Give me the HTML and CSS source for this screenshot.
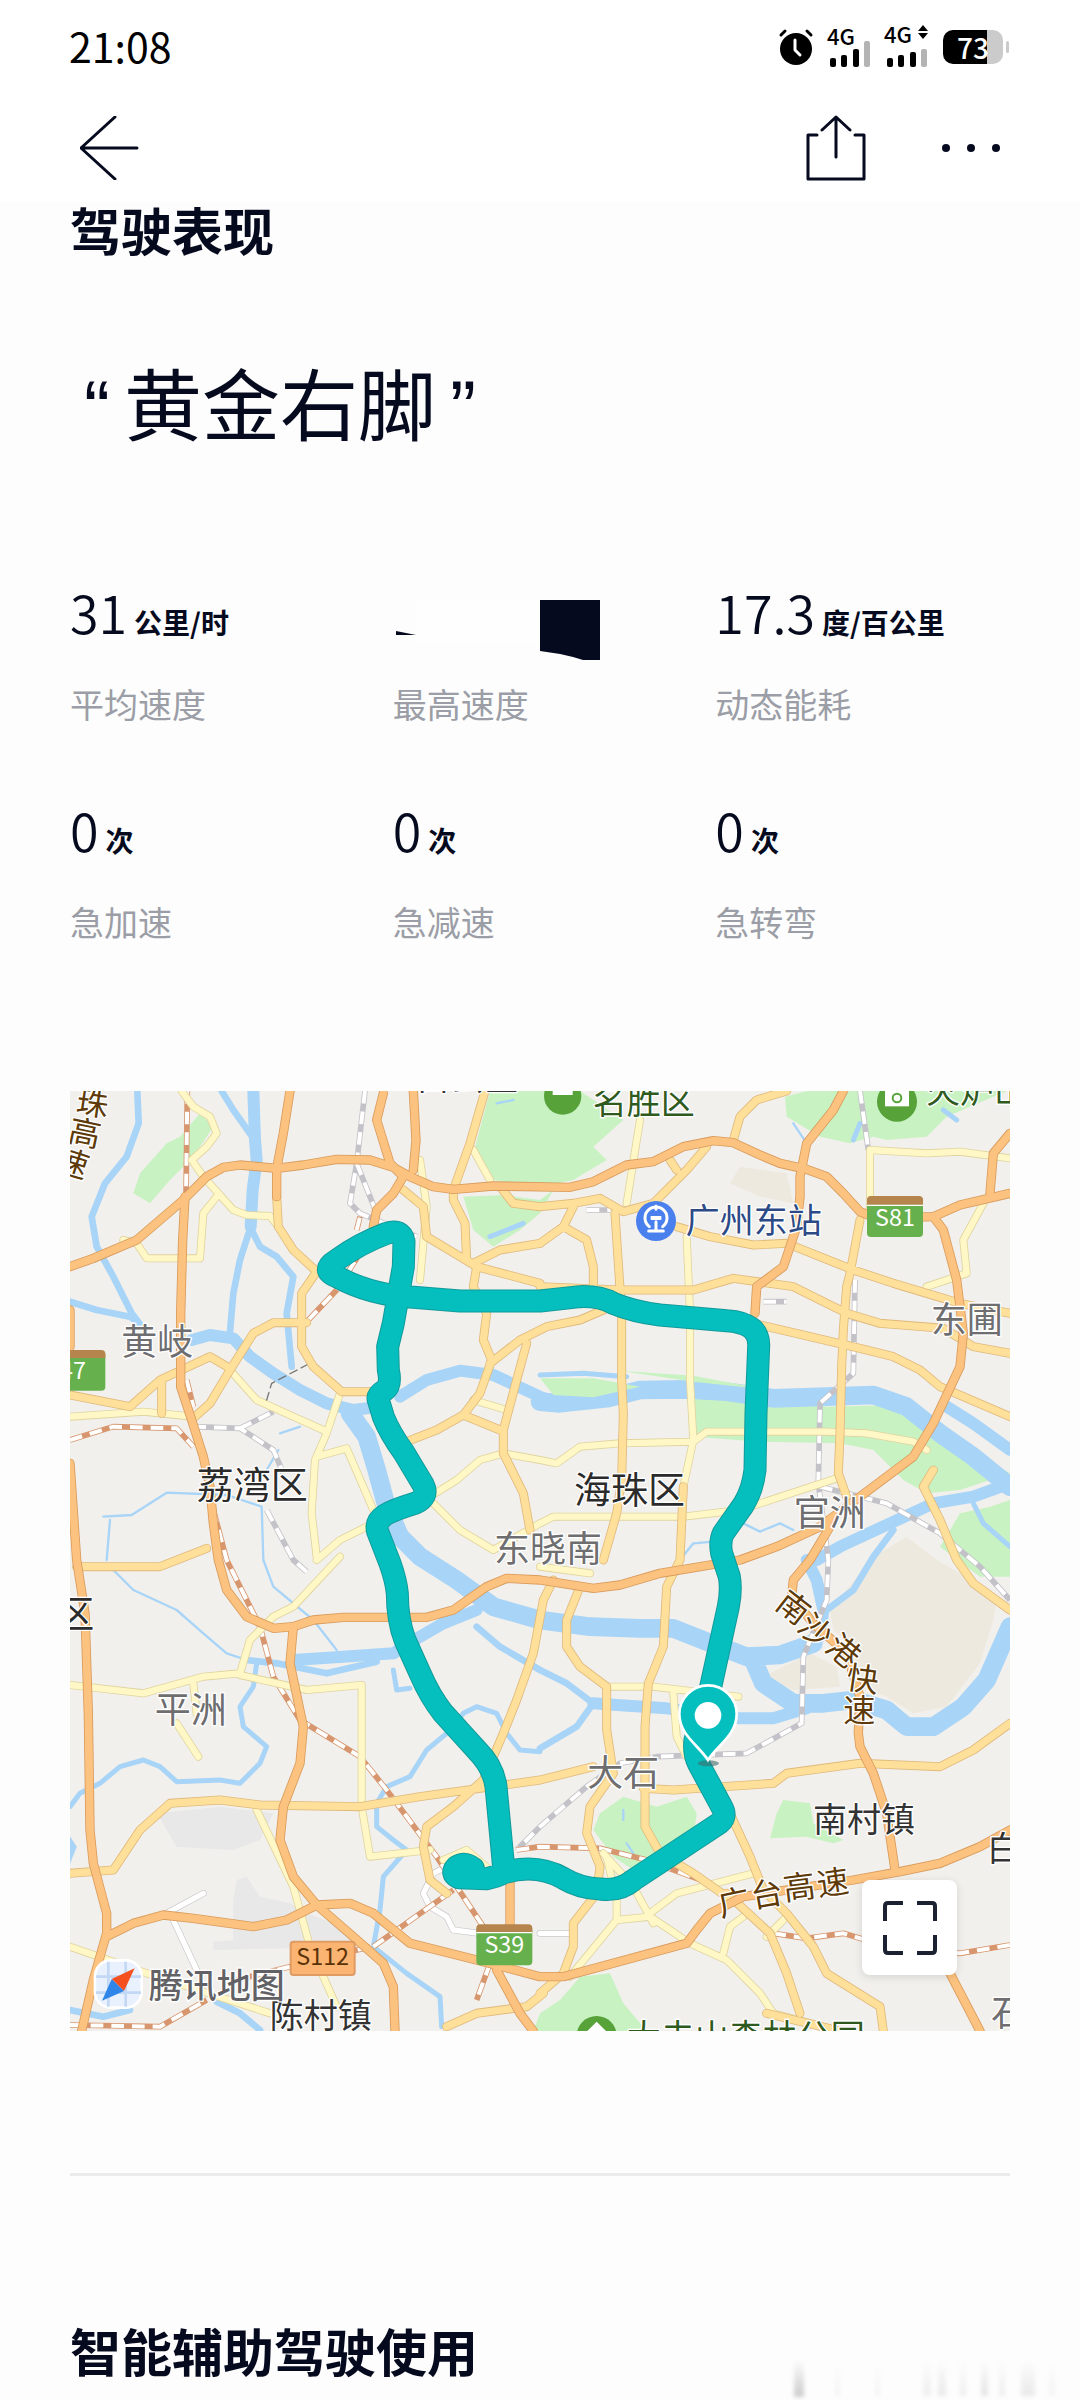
FILE: index.html
```html
<!DOCTYPE html>
<html lang="zh-CN">
<head>
<meta charset="utf-8">
<meta name="viewport" content="width=device-width, initial-scale=1">
<title>驾驶表现</title>
<link rel="stylesheet" href="styles.css">
</head>
<body>
<header class="top">
  <div class="status">
    <time class="clock">21:08</time>
    <div class="indicators">
      <svg class="ind-alarm" viewBox="0 0 36 40" aria-hidden="true">
        <circle cx="18" cy="22" r="16"/>
        <path class="ear" d="M3 8 7 4M29 4l4 4"/>
        <path class="hand" d="M17 13v10l5 5"/>
      </svg>
      <div class="signal">
        <span class="net">4G</span>
        <svg viewBox="0 0 42 28" aria-hidden="true"><rect x="1" y="19" width="6" height="9" rx="2"/><rect x="12" y="16" width="6" height="12" rx="2"/><rect x="24" y="10" width="6" height="18" rx="2"/><rect class="off" x="35" y="2" width="6" height="26" rx="2"/></svg>
      </div>
      <div class="signal">
        <span class="net">4G</span>
        <svg viewBox="0 0 42 28" aria-hidden="true"><rect x="1" y="19" width="6" height="9" rx="2"/><rect x="12" y="16" width="6" height="12" rx="2"/><rect x="24" y="13" width="6" height="15" rx="2"/><rect class="off" x="35" y="10" width="6" height="18" rx="2"/></svg>
        <svg class="updown" viewBox="0 0 10 14" aria-hidden="true"><path d="M0 6 5 0l5 6zM0 8l5 6 5-6z"/></svg>
      </div>
      <div class="battery"><span>73</span></div>
    </div>
  </div>
  <nav class="bar">
    <button class="icon-btn" type="button" aria-label="返回">
      <svg width="60" height="64" viewBox="0 0 60 64"><path d="M35 1 1 32l34 31M1 32h56"/></svg>
    </button>
    <div class="bar-right">
      <button class="icon-btn" type="button" aria-label="分享">
        <svg width="60" height="66" viewBox="0 0 60 66"><path d="M11 20H2v44h56V20h-9M30 42V2M16 15 30 2l14 13"/></svg>
      </button>
      <button class="icon-btn" type="button" aria-label="更多">
        <svg class="dots" width="60" height="10" viewBox="0 0 60 10"><circle cx="5" cy="5" r="4"/><circle cx="30" cy="5" r="4"/><circle cx="55" cy="5" r="4"/></svg>
      </button>
    </div>
  </nav>
</header>

<main class="page">
  <section>
    <h1 class="title">驾驶表现</h1>
    <p class="verdict"><span class="quote">“</span>黄金右脚<span class="quote">”</span></p>
    <dl class="stats">
      <div class="stat"><dd>31<small>公里/时</small></dd><dt>平均速度</dt></div>
      <div class="stat">
        <dd><svg class="masked" width="206" height="64" viewBox="0 0 206 64" aria-hidden="true"><path class="patch" d="M22 20H147V62H22z"/><path d="M3 51l20 4H3zM147 20h60v60h-17l-10-3q-16-4-33-6z"/></svg></dd>
        <dt>最高速度</dt>
      </div>
      <div class="stat"><dd>17.3<small>度/百公里</small></dd><dt>动态能耗</dt></div>
      <div class="stat"><dd>0<small>次</small></dd><dt>急加速</dt></div>
      <div class="stat"><dd>0<small>次</small></dd><dt>急减速</dt></div>
      <div class="stat"><dd>0<small>次</small></dd><dt>急转弯</dt></div>
    </dl>

    <div class="map">
      <svg class="map-art" viewBox="30 33 2820 2820" role="img" aria-label="行程路线地图">
        <defs>
          <g id="pale">
            <path d="M365 33 400 80 450 110 470 160 440 200 395 240 430 290 520 390 560 405 630 408 655 440M190 480 230 490 260 535 420 535 430 400 470 350M30 1010 250 995 400 1010M510 870 590 960 700 1010 790 1050M840 940 800 1060 765 1140 755 1300 770 1430M840 1430 700 1580 640 1610 570 1680 540 1780 430 1790 250 1840 30 1815M540 1785 740 1830 905 1815 905 2180 930 2330 1110 2310M770 1130 860 1105 940 1290M940 1330 840 1380 770 1440"/>
            <path d="M1110 1250 1190 1200 1260 1140 1330 1120 1440 1140 1490 1150 1560 1100 1680 1090 1900 1085 1940 1055 2300 1055 2420 1060 2560 1085 2600 1110M1120 1270 1200 1350 1300 1410 1440 1330 1480 1310 1700 1310 1870 1310 2040 1290 2330 1195M1740 120 1700 370M1880 470 1890 700 1890 900 1900 1080 1870 1220M2430 400 2430 210 2600 220 2700 215 2850 235M2770 370 2710 480 2720 580 2600 620M1240 960 1340 990M1240 210 1290 300M1080 240 1100 380 1080 600M1440 1460 1590 1480"/>
            <path d="M590 2190 700 2420 750 2600 830 2780M400 1810 410 1900M350 1930 415 2030M1640 1820 1780 1820 2035 1850M1840 1840 1850 1970 1880 2030M1530 2690 1670 2520 1670 2460 1640 2330M1670 2520 1770 2510 1890 2590 2000 2640 2100 2740 2140 2800 2340 2853M1770 2500 1850 2440 2080 2380M1630 2320 1720 2420 1780 2530M1990 2620 2010 2540 2050 2510M2120 2570 2180 2510M30 2600 260 2680 630 2800M1150 2340 1220 2310 1290 2370"/>
          </g>
          <g id="yellow">
            <path d="M650 350 655 440 700 510 770 575 725 640 725 800 760 860 845 935 960 935M30 945 210 980 300 900 450 830 510 865M305 900V1000M405 1010 450 970 510 870 580 760 640 728 740 728M1275 33 1230 190 1180 330 1180 360 1215 430 1220 540 1250 560 1240 620 1280 700 1270 780 1295 840 1260 940 1210 1005 1130 1050 1040 1085M1030 330 1090 380 1100 470 1250 560 1440 610M1240 550 1320 510 1440 490M1290 850 1380 780 1460 740 1560 720 1630 690M1400 790 1370 900 1330 1050 1330 1120 1390 1240 1410 1350M1210 1005 1320 1050"/>
            <path d="M1440 620 1680 630 1900 630 2020 595 2200 620 2360 700 2460 730 2650 745 2740 800 2850 820M2080 730 2400 805 2500 830 2580 870 2640 920 2850 1010M1850 440 1950 470 2080 495 2180 490 2380 570 2500 610 2700 670 2850 700M1320 320 1360 370 1440 380 1540 370 1620 355 1690 395 1780 370 1880 270 1940 200M1830 240 1850 270M2020 180 2040 110 2090 60 2180 33M1665 400 1675 550 1685 700 1685 900 1690 1000 1685 1200 1670 1300 1630 1440M1540 380 1510 440 1440 490M1510 440 1580 480 1600 560 1600 620M2400 420 2370 580 2360 620 2350 750 2345 860 2340 1060 2335 1180 2360 1250M2620 1170 2590 1220 2640 1320 2690 1440 2740 1510 2850 1590"/>
            <path d="M1870 1220 1860 1440 1820 1520 1810 1700 1765 1810 1755 1940 1755 2240 1800 2320 1900 2380 2000 2450M1480 1500 1450 1560 1420 1720 1370 1860 1330 1960 1270 2100 1180 2180 1100 2240 1090 2300 1110 2400 1160 2440M1560 1520 1520 1620 1520 1700 1560 1760 1640 1820 1640 1950 1660 2080 1590 2180 1580 2260 1620 2360 1610 2440 1540 2530 1540 2600 1510 2680 1440 2740M50 1460 300 1460 440 1405M30 2380 160 2370 240 2250 330 2170 480 2160 600 2175 900 2180 1080 2150 1440 2100 1600 2060M1750 2125 1840 2130 2140 2110 2180 2080 2400 2050 2640 2060 2740 2010 2850 1930M2010 2200 2070 2330 2110 2430 2180 2500 2260 2600 2300 2680 2460 2780 2470 2853M2000 2440 2130 2560 2180 2680 2220 2800M1160 2840 1250 2800 1400 2780 1450 2740M2120 2800 2340 2853"/>
          </g>
          <g id="orange">
            <path d="M30 560 100 535 230 480 300 420 370 360 440 290 490 262 540 255 650 265 730 255 830 238 930 240 1000 262 1050 290 1120 320 1180 328 1300 318 1530 322 1600 305 1700 255 1780 245 1870 200 1960 182 2020 188 2100 225 2160 250 2240 268 2300 290 2350 340 2400 395 2450 415 2620 410 2700 375 2850 340M690 33 670 160 650 265 650 350M970 40 950 120 990 250 1030 290 1000 340 950 390 940 440M1060 33 1068 180 1060 270M2350 33 2320 90 2240 190 2220 290 2220 350 2210 440 2170 560 2090 620 2085 700M2850 160 2800 220 2790 340M30 690V800"/>
            <path d="M375 350 368 480 362 700 362 920 395 1020 430 1130 450 1220 460 1330 475 1440 500 1530 560 1610 640 1645 700 1640 760 1620 850 1612 1100 1612 1180 1590 1280 1520 1340 1495 1440 1500 1600 1525 1680 1515 1800 1480 2040 1440 2150 1400 2280 1340 2440 1220 2560 1130 2620 1030 2700 860 2710 760 2690 600 2650 450 2620 410"/>
            <path d="M2310 1340 2250 1440 2200 1500 2195 1550 2260 1630 2360 1720 2400 1850 2395 1960 2400 2000 2440 2080 2480 2200 2505 2370M30 1150 50 1440 75 1600 85 1900 90 2250 100 2350 140 2500 140 2560 100 2700 65 2853M140 2570 220 2530 310 2505 400 2515 580 2540 680 2520 770 2475 870 2470 940 2500 1050 2590 1250 2640 1440 2690 1510 2690 1640 2655 1880 2590 1910 2550 1950 2500 2050 2450 2380 2400 2520 2375 2640 2350 2760 2300 2850 2250M700 1640 690 1750 730 1940 720 2050 670 2180 660 2280 700 2390 770 2475 880 2570 970 2650 1000 2720 1005 2853M2670 2680 2760 2853M1350 2400 1350 2600 1310 2670 1380 2800 1420 2853"/>
          </g>
          <g id="rail-grey">
            <path d="M915 33 890 250 870 370 900 400 1070 470M890 250 950 400M400 1040 540 1045 640 1110 670 1180M540 1045 640 995M620 1290 700 1440 740 1475M2400 33 2425 210M2385 600 2380 880 2280 970 2275 1210 2305 1440 2300 1560 2230 1730 2225 1930 2060 2020 1790 2030 1680 2050 1580 2120 1440 2240 1370 2310M2280 1220 2480 1270 2640 1360 2760 1460 2850 1560M2110 665H2180M1580 390H1650"/>
          </g>
          <g id="rail-brown">
            <path d="M382 33 378 350M380 900 400 980M30 1080 160 1040 350 1045 400 1100M460 1290 500 1440 600 1640 640 1790 720 1920 900 2030 980 2130 1130 2330 1270 2540M745 720 830 630 900 520M890 450 900 410M940 2600 1180 2430M1370 2310 1440 2300 1620 2305 1760 2340 1950 2410M2140 2560 2240 2575 2350 2560 2450 2590 2700 2620 2850 2595M30 2835 300 2840 440 2760M1290 2650 1250 2760M930 2600 530 2700"/>
          </g>
          <path id="route" d="M1240 2365Q1215 2345 1190 2360 1170 2380 1195 2393L1280 2396Q1310 2390 1332 2378L1328 2330 1308 2120Q1300 2060 1250 2010L1150 1900Q1110 1850 1080 1780L1035 1680Q1012 1620 1012 1540 1008 1500 990 1450L953 1355Q945 1325 975 1305 1000 1290 1065 1270 1108 1250 1090 1215L1030 1115Q990 1060 970 1010L955 960Q950 945 975 930 995 915 985 870L983 800 1000 730 1030 560 1032 485Q1025 445 980 460 900 490 830 540 780 570 830 590 930 645 1060 652L1200 663 1440 663 1560 650Q1620 648 1660 670 1720 695 1800 705L2000 722Q2100 728 2096 800L2088 1000 2085 1170Q2078 1230 2050 1275L1990 1360Q1978 1385 1985 1420L2008 1490Q2015 1530 2005 1580L1950 1830 1905 1980Q1900 2020 1915 2050L1985 2180Q2005 2215 1970 2235L1720 2400Q1680 2435 1620 2427 1560 2425 1510 2395 1430 2350 1332 2378"/>
        </defs>

        <rect class="land" x="30" y="33" width="2820" height="2820"/>
        <path class="campus" d="M2630 1440 2540 1370 2440 1430 2310 1590 2320 1650 2380 1700 2400 1820 2480 1850 2560 1900 2660 1880 2760 1750 2800 1620 2810 1560 2700 1480zM2110 1790 2250 1720 2330 1760 2340 1820 2200 1830zM2010 310 2040 260 2180 280 2200 370 2100 350z"/>
        <path class="industry" d="M290 2200 480 2180 640 2200 600 2280 520 2310 350 2300zM530 2400 560 2390 600 2450 690 2470 740 2500 880 2550V2600L460 2610V2585L520 2580V2460z"/>
        <path class="park" d="M1290 33H1560L1690 120 1600 200 1640 240 1540 300 1440 320 1300 300 1240 220zM1210 350 1330 345 1440 360 1480 330 1440 400 1380 450 1300 500 1240 450zM220 340 240 280 320 190 360 170 420 100 460 140 400 230 330 300 270 370zM2175 50 2240 33H2840L2660 110 2600 170 2480 180 2440 170 2370 190 2280 170 2180 110zM1900 940 2080 955 2300 980 2500 975 2620 1050 2850 1180 2700 1230 2600 1240 2530 1200 2440 1110 2340 1090 2100 1085 1900 1070zM2640 1400 2700 1300 2790 1280 2850 1260V1490H2760zM1620 2200 1690 2150 1790 2180 1880 2150 1910 2200 1900 2280 1770 2330 1720 2370 1660 2330 1600 2250zM2150 2200 2170 2160 2250 2170 2260 2230 2350 2280 2320 2290 2240 2270 2130 2275zM1440 2800 1500 2760 1560 2690 1650 2680 1690 2770 1760 2853H1420z"/>
        <g class="water">
          <path class="w8" d="M130 1310 215 1305 320 1238 500 1245 605 1280 610 1440 640 1520 760 1620 830 1710M160 1470 220 1530 350 1590 430 1660 500 1720 560 1740M655 1110 620 1170M720 1040 660 1060M150 1320 140 1440M1860 1440 1900 1390 1960 1385M2050 1330 2100 1355 2160 1330 2200 1350M1690 2190V2220M1700 2290 1720 2320M1310 70 1360 60M2200 130 2240 190"/>
          <path class="w14" d="M1440 2015 1380 2010 1340 1960 1310 1900 1250 1880 1210 1900 1160 1960 1100 2010 1050 2090 980 2120 950 2170V2240L1000 2280 1040 2310 970 2390 960 2490 940 2600 1040 2680 1140 2750 1145 2840M1000 1770 1010 1830 1050 1825M590 1750 580 1820 540 1880 550 1940 620 2000 600 2050 540 2110 480 2100 350 2105 300 2060 250 2040 180 2060 120 2110 60 2140 30 2180M1440 885 1570 880 1700 890M2740 1270 2770 1330 2850 1400M2380 180 2400 130M2650 90 2690 120M1290 470 1340 450 1390 430"/>
          <path class="w22" d="M232 33 236 130 200 230 135 310 95 410 110 500 160 590 215 700 250 745M30 665 110 690 210 710 250 740M485 33 520 90 580 175M572 440 540 540 520 640 510 755M575 450 600 500 650 530 700 590 680 700 695 860M1250 1640 1320 1700 1440 1770 1520 1810 1600 1870 1550 1940 1440 2005M2500 1350 2440 1430 2380 1530 2300 1590M30 2790 130 2810 210 2790M470 2765 540 2800 600 2850M560 1740 650 1750 800 1780 950 1745"/>
          <path class="w34" d="M580 33 585 180 590 240 578 330 572 440M395 780 450 765 520 775 570 830 640 880 720 930 800 970 880 990 960 980M1020 950 1100 900 1200 872 1300 885 1440 950 1500 975M2660 980 2740 1030 2850 1110M700 1740 850 1730 1000 1720 1080 1670 1150 1630 1250 1590M1600 1870 1670 1875 1820 1885 2040 1915 2140 1915 2240 1885M2240 1440 2270 1500 2290 1590 2280 1670 2220 1710 2080 1730M2850 1210 2740 1250 2620 1270 2490 1330 2340 1400 2270 1440"/>
          <path class="w52" d="M870 1000 920 1070 950 1170 980 1280 1020 1370 1080 1430 1190 1500 1300 1580 1440 1620 1590 1640 1740 1645 1840 1645 1940 1685 2060 1730 2160 1725 2260 1690M1440 965 1500 970 1640 955 1740 930 1880 928 2000 935 2140 955 2300 950 2440 945 2540 980 2640 1060 2740 1130 2850 1220M2080 1740 2110 1810 2200 1870 2290 1870 2380 1860 2480 1890 2540 1940 2620 1940 2710 1880 2780 1800 2850 1640"/>
          <path class="pond" d="M30 2270 50 2300 30 2350z"/>
        </g>
        <path class="park" d="M1440 895 1600 895 1740 920 1600 952 1480 945zM1680 872 1900 887 2130 930 1900 905z"/>

        <g class="line">
          <path class="casing-white" d="M1180 2350 1120 2380 1090 2440 1110 2480 1160 2510 1180 2550 1260 2560M1440 2560H1530M310 2505 430 2440M335 2510 410 2670"/>
          <path class="fill-white" d="M1180 2350 1120 2380 1090 2440 1110 2480 1160 2510 1180 2550 1260 2560M1440 2560H1530M310 2505 430 2440M335 2510 410 2670"/>
          <use href="#rail-grey" class="rail-g"/><use href="#rail-grey" class="rail-w"/>
          <use href="#rail-brown" class="rail-b"/><use href="#rail-brown" class="rail-w"/>
          <use href="#pale" class="casing-pale"/><use href="#pale" class="fill-pale"/>
          <use href="#yellow" class="casing-yellow"/><use href="#yellow" class="fill-yellow"/>
          <use href="#orange" class="casing-orange"/><use href="#orange" class="fill-orange"/>
          <path class="tunnel" d="M620 960 635 910 740 855"/>
          <use href="#route" class="casing-route"/><use href="#route" class="fill-route"/>
        </g>

        <g class="shields">
          <path class="green" d="M30 812h94q12 0 12 12v96q0 12-12 12H30z"/><path class="cap" d="M30 810h94q12 0 12 12v12H30z"/>
          <rect class="green" x="2421" y="350" width="168" height="121" rx="12"/><path class="cap" d="M2421 374v-14q0-12 12-12h144q12 0 12 12v14z"/><path class="rule" d="M2421 376h168"/>
          <rect class="green" x="1249" y="2540" width="168" height="116" rx="12"/><path class="cap" d="M1249 2556v-11q0-12 12-12h144q12 0 12 12v11z"/><path class="rule" d="M1249 2558h168"/>
          <rect class="amber" x="692" y="2585" width="192" height="100" rx="8"/>
          <text class="on-green" x="78" y="897" text-anchor="end">47</text>
          <text class="on-green" x="2505" y="438" text-anchor="middle">S81</text>
          <text class="on-green" x="1333" y="2620" text-anchor="middle">S39</text>
          <text class="on-amber" x="788" y="2655" text-anchor="middle">S112</text>
        </g>

        <g class="pois">
          <circle class="poi-green" cx="1508" cy="48" r="56"/><path class="poi-mark" d="M1478 33h60v12h-60z"/>
          <circle class="poi-green" cx="2511" cy="65" r="60"/><path class="poi-mark" d="M2475 33h72v46h-72z"/><circle class="poi-ring" cx="2511" cy="54" r="13"/>
          <circle class="poi-green" cx="1610" cy="2868" r="60"/><path class="poi-mark" d="M1610 2825l34 34h-68z"/>
          <circle class="poi-blue" cx="1788" cy="423" r="60"/>
          <path class="metro" d="M1768 440a33 33 0 1 1 40 0M1788 425v28M1766 453h44M1788 378v10"/><path class="metro-window" d="M1772 414h32"/>
        </g>

        <g class="labels">
          <g class="district">
            <text x="410" y="1257">荔湾区</text><text x="1542" y="1271">海珠区</text><text x="-8" y="1643">区</text>
          </g>
          <g class="town">
            <text x="184" y="824">黄岐</text><text x="2612" y="759">东圃</text><text x="2201" y="1337">官洲</text><text x="1302" y="1447">东晓南</text><text x="284" y="1929">平洲</text><text x="1582" y="2117">大石</text><text x="2794" y="2837">石</text>
          </g>
          <g class="village">
            <text x="629" y="2845">陈村镇</text><text x="2259" y="2256">南村镇</text><text x="2780" y="2344">白</text><text x="1068" y="30">白云区</text>
          </g>
          <g class="scenic">
            <text x="1598" y="101">名胜区</text><text x="2598" y="69">火炉山</text><text x="1700" y="2908">大夫山森林公园</text>
          </g>
          <text class="station" x="1877" y="458">广州东站</text>
          <g class="road" text-anchor="middle">
            <text transform="translate(97 70) rotate(8)" y="34">珠</text>
            <text transform="translate(74 160) rotate(12)" y="34">高</text>
            <text transform="translate(38 250) rotate(18)" y="34">速</text>
            <text transform="translate(2200 1583) rotate(38)" y="34">南</text>
            <text transform="translate(2266 1652) rotate(40)" y="34">沙</text>
            <text transform="translate(2350 1713) rotate(40)" y="34">港</text>
            <text transform="translate(2408 1798) rotate(8)" y="34">快</text>
            <text transform="translate(2398 1892)" y="34">速</text>
            <text transform="translate(2022 2468) rotate(-12)" y="34">广</text>
            <text transform="translate(2120 2443) rotate(-10)" y="34">台</text>
            <text transform="translate(2218 2422) rotate(-7)" y="34">高</text>
            <text transform="translate(2318 2408) rotate(-8)" y="34">速</text>
          </g>
        </g>

        <ellipse class="pin-shadow" cx="1945" cy="2050" rx="32" ry="9"/>
        <path class="pin" d="M1944 2040C1915 1995 1858 1965 1858 1902a86 86 0 0 1 172 0C2030 1965 1973 1995 1944 2040z"/>
        <circle class="pin-dot" cx="1944" cy="1906" r="40"/>

        <g class="brand">
          <rect class="brand-tile" x="105" y="2641" width="140" height="142" rx="48"/>
          <path class="brand-grid" d="M145 2645V2780M197 2645V2780M108 2690H243M108 2738H243"/>
          <path class="needle-red" d="M224 2665 155 2697 192 2733z"/><path class="needle-blue" d="M126 2762 155 2697 192 2733z"/>
          <text x="266" y="2753">腾讯地图</text>
        </g>
      </svg>
      <button class="expand" type="button" aria-label="全屏查看">
        <svg width="54" height="54" viewBox="0 0 54 54"><path d="M20 2H5Q2 2 2 5V20M34 2H49Q52 2 52 5V20M52 34V49Q52 52 49 52H34M20 52H5Q2 52 2 49V34"/></svg>
      </button>
    </div>
  </section>
  <hr class="divider">
  <section>
    <h2 class="title">智能辅助驾驶使用</h2>
  </section>
  <svg class="smudge" width="284" height="40" viewBox="0 0 284 40" aria-hidden="true">
    <defs><linearGradient id="fade" x1="0" y1="0" x2="0" y2="1"><stop offset="0" stop-color="#999" stop-opacity="0"/><stop offset="1" stop-color="#999" stop-opacity=".5"/></linearGradient></defs>
    <g fill="url(#fade)"><rect x="3" y="2" width="10" height="37"/><rect x="44" y="4" width="5" height="34" opacity=".2"/><rect x="84" y="4" width="5" height="34" opacity=".2"/><rect x="132" y="2" width="8" height="36" opacity=".3"/><rect x="147" y="2" width="8" height="36" opacity=".4"/><rect x="169" y="2" width="6" height="36" opacity=".3"/><rect x="190" y="2" width="7" height="36" opacity=".5"/><rect x="208" y="2" width="6" height="36" opacity=".3"/><rect x="230" y="2" width="14" height="36" opacity=".4"/><rect x="258" y="2" width="6" height="36" opacity=".2"/></g>
  </svg>
</main>
</body>
</html>
```
FILE: styles.css
```css
:root {
  --ink: #050a1e;
  --muted: #9b9ea6;
  --gutter: 70px;
}

* { box-sizing: border-box; }

body {
  margin: 0;
  background: #fdfdfd;
  color: var(--ink);
  font-family: "Noto Sans CJK SC", "Noto Sans", sans-serif;
}

h1, h2, p, dl, dd, dt { margin: 0; }

/* Status bar and navigation */
.top { background: #fff; }

.status {
  display: flex;
  align-items: center;
  justify-content: space-between;
  height: 94px;
  padding: 0 77px 0 69px;
  color: #000;
}

.clock { font-size: 41px; line-height: 44px; padding-bottom: 4px; }

.indicators { display: flex; align-items: center; gap: 15px; }

.ind-alarm { width: 36px; height: 40px; }
.ind-alarm path { fill: none; stroke-linecap: round; stroke-linejoin: round; }
.ind-alarm .ear { stroke: #000; stroke-width: 3; }
.ind-alarm .hand { stroke: #fff; stroke-width: 3; }

.signal {
  display: grid;
  grid-template-columns: 28px 14px;
  height: 40px;
  align-content: end;
}
.signal .net {
  grid-area: 1 / 1;
  font-size: 22px;
  font-weight: 500;
  line-height: 16px;
  height: 12px;
  margin-left: -2px;
}
.signal svg { grid-area: 2 / 1 / 3 / 3; width: 42px; height: 28px; }
.signal .updown { grid-area: 1 / 2; width: 10px; height: 14px; justify-self: end; }
.signal .off { fill: #b4b4b4; }

.battery {
  position: relative;
  display: flex;
  align-items: center;
  justify-content: center;
  width: 60px;
  height: 34px;
  border-radius: 10px;
  background: linear-gradient(90deg, #000 44px, #cbcbcb 44px);
  color: #fff;
  font-size: 28px;
  font-weight: 500;
  line-height: 34px;
}
.battery::after {
  content: "";
  position: absolute;
  right: -6px;
  top: 11px;
  width: 3px;
  height: 12px;
  border-radius: 2px;
  background: #cbcbcb;
}

.bar {
  display: flex;
  align-items: center;
  justify-content: space-between;
  height: 108px;
  padding: 0 79px 0 80px;
}
.bar-right { display: flex; align-items: center; gap: 75px; }

.icon-btn {
  display: block;
  padding: 0;
  border: 0;
  background: none;
}
.icon-btn svg { display: block; fill: none; stroke: var(--ink); stroke-width: 3; stroke-linecap: round; stroke-linejoin: round; }
.icon-btn .dots { fill: var(--ink); stroke: none; }

/* Page content */
.page { position: relative; padding: 0 var(--gutter) 23px; }

.title { font-size: 51px; font-weight: 700; line-height: 54px; }

.verdict {
  margin-top: 95px;
  font-size: 78px;
  line-height: 100px;
}
.quote {
  display: inline-block;
  width: 54px;
  font-family: "Liberation Sans", sans-serif;
  line-height: 78px;
  text-align: center;
}

.stats {
  display: grid;
  grid-template-columns: repeat(3, 1fr);
  gap: 70px 28px;
  margin-top: 129px;
}
.stat { display: flex; flex-direction: column; gap: 36px; }
.stat dd { height: 64px; font-size: 52px; font-weight: 350; line-height: 64px; white-space: nowrap; }
.stat small { margin-left: 7px; font-size: 28px; font-weight: 700; }
.stat dt { color: var(--muted); font-size: 34px; line-height: 48px; }
.masked { display: block; overflow: visible; fill: var(--ink); }
.masked .patch { fill: #fefefe; }

/* Map */
.map { position: relative; margin-top: 145px; }
.map-art { display: block; width: 100%; aspect-ratio: 1; overflow: hidden; }

.land { fill: #f2f0ec; }
.campus { fill: #eee9df; }
.industry { fill: #e8e8e9; }
.park { fill: #c9f2c3; }

.water path { fill: none; stroke: #a8d4f7; stroke-linecap: round; stroke-linejoin: round; }
.water .w8 { stroke-width: 7; }
.water .w14 { stroke-width: 15; }
.water .w22 { stroke-width: 20; }
.water .w34 { stroke-width: 36; }
.water .w52 { stroke-width: 56; }
.water .pond { fill: #a8d4f7; }

.line { fill: none; stroke-linecap: round; stroke-linejoin: round; }
.casing-white { stroke: #c9c9cc; stroke-width: 20; }
.fill-white { stroke: #fff; stroke-width: 16; }
.casing-pale { stroke: #e0d4a0; stroke-width: 24; }
.fill-pale { stroke: #fff8c6; stroke-width: 19; }
.casing-yellow { stroke: #e0b97c; stroke-width: 27; }
.fill-yellow { stroke: #fee09a; stroke-width: 22; }
.casing-orange { stroke: #d99b5c; stroke-width: 28; }
.fill-orange { stroke: #fcc27f; stroke-width: 23; }
.rail-g { stroke: #c3c2c8; stroke-width: 17; stroke-linecap: butt; }
.rail-b { stroke: #d7966e; stroke-width: 17; stroke-linecap: butt; }
.rail-w { stroke: #fff; stroke-width: 12; stroke-linecap: butt; stroke-dasharray: 38 24; }
.tunnel { stroke: #777; stroke-width: 4; stroke-dasharray: 24 14; }
.casing-route { stroke: #119a9a; stroke-width: 69; }
.fill-route { stroke: #05bfbf; stroke-width: 63; }

.green { fill: #66b04d; }
.cap { fill: #b5854d; }
.rule { stroke: #fff; stroke-width: 4; }
.amber { fill: #fbb471; stroke: #e09a63; stroke-width: 6; }
.on-green, .on-amber { font-size: 70px; }
.on-green { fill: #fff; }
.on-amber { fill: #5b3208; }

.poi-green { fill: #57a33a; }
.poi-blue { fill: #4a80ee; }
.poi-mark { fill: #fff; }
.poi-ring { fill: none; stroke: #57a33a; stroke-width: 6; }
.metro { fill: none; stroke: #fff; stroke-width: 9; stroke-linecap: round; }
.metro-window { fill: none; stroke: #fff; stroke-width: 12; }

.labels text { paint-order: stroke; stroke: #fff; stroke-width: 8; stroke-linejoin: round; }
.district { font-size: 111px; fill: #2b2b2b; }
.town { font-size: 108px; fill: #6e6e70; }
.village { font-size: 102px; fill: #333; }
.scenic { font-size: 102px; fill: #2f5a1e; }
.station { font-size: 102px; fill: #2c4a86; }
.road { font-size: 96px; fill: #5e3a08; }

.pin-shadow { fill: #3d6c6c; opacity: .6; }
.pin { fill: #05bfbf; stroke: #fff; stroke-width: 8; }
.pin-dot { fill: #fff; }

.brand-tile { fill: #e8f1fd; stroke: #fff; stroke-width: 8; }
.brand-grid { fill: none; stroke: #c2d8f5; stroke-width: 8; }
.needle-red { fill: #f4511e; }
.needle-blue { fill: #2f86e8; }
.brand text { font-size: 102px; font-weight: 500; fill: #626266; paint-order: stroke; stroke: #fff; stroke-width: 8; }

.expand {
  position: absolute;
  right: 53px;
  bottom: 56px;
  display: flex;
  align-items: center;
  justify-content: center;
  width: 95px;
  height: 95px;
  padding: 0;
  border: 0;
  border-radius: 8px;
  background: #fff;
  box-shadow: 0 2px 8px rgba(0, 0, 0, .12);
}
.expand svg { fill: none; stroke: #1d2233; stroke-width: 4; }

.divider {
  height: 3px;
  margin: 142px 0 147px;
  border: 0;
  background: #ebebeb;
}

.smudge { position: absolute; right: 5px; bottom: 2px; filter: blur(2px); }
```
